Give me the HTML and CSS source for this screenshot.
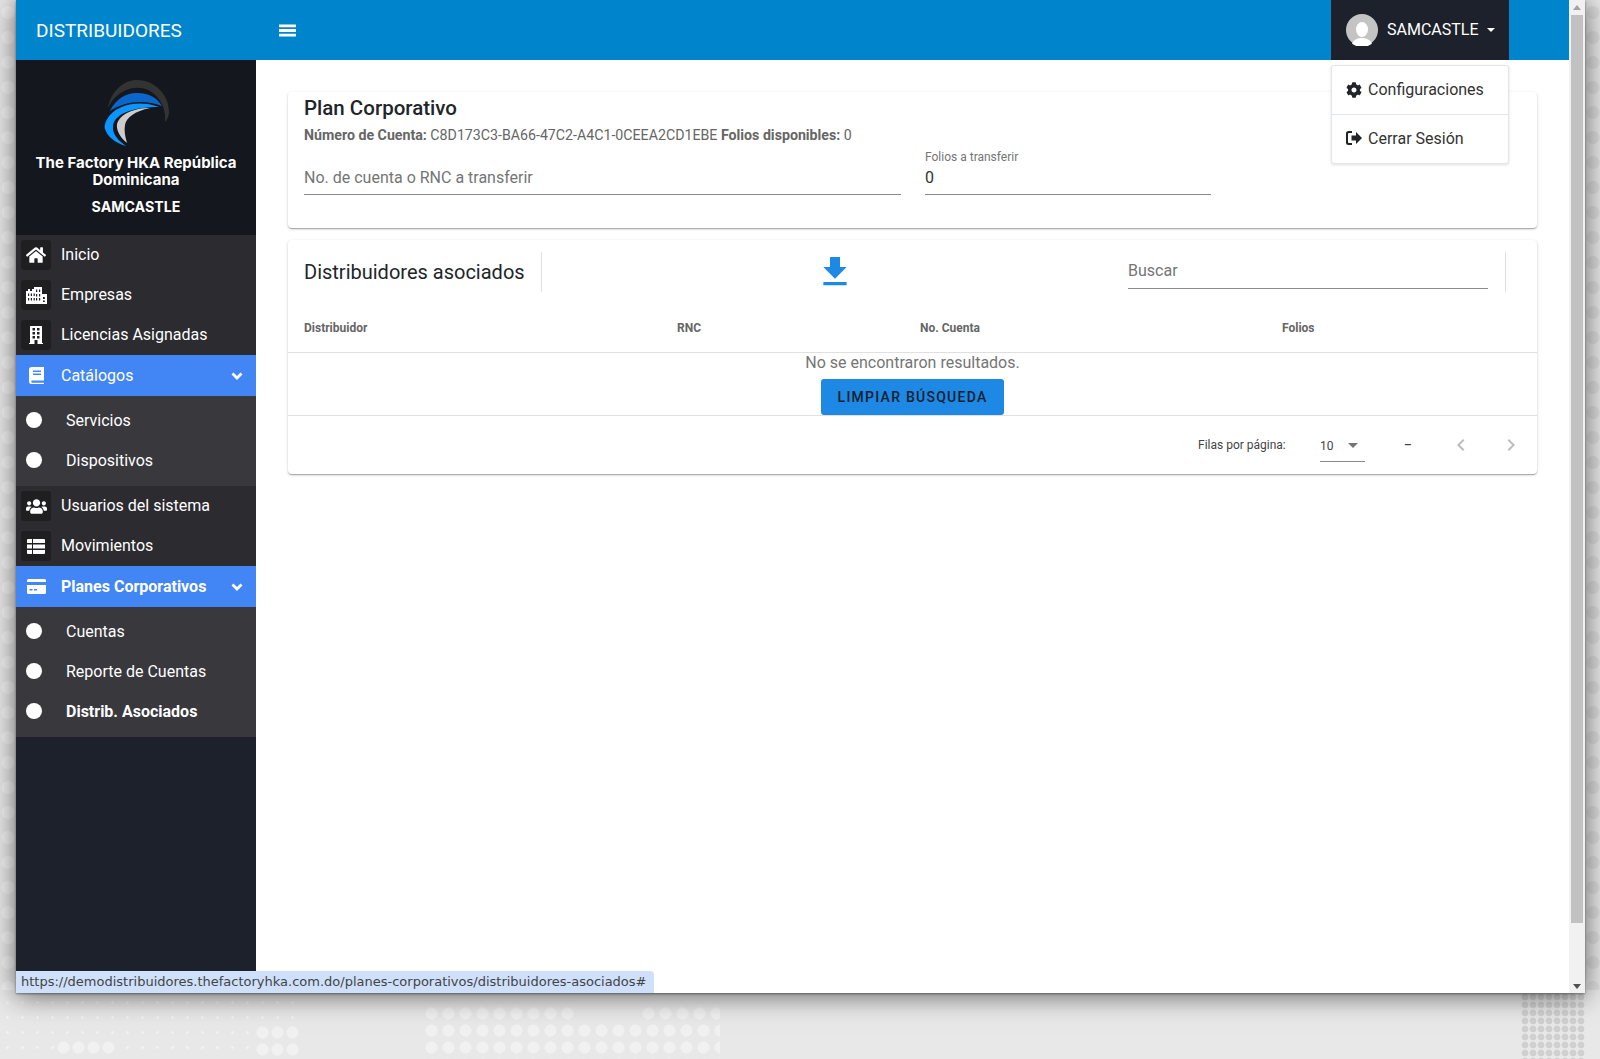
FILE: index.html
```html
<!DOCTYPE html>
<html lang="es">
<head>
  <meta charset="UTF-8">
  <title>Distribuidores</title>
  <link rel="stylesheet" href="styles.css">
</head>
<body>
  <!-- dotted wallpaper behind the browser window -->
  <div class="dots specks"></div>
  <div class="dots hex hex-a"></div>
  <div class="dots hex hex-b"></div>
  <div class="dots hex hex-c"></div>
  <div class="dots hex hex-d"></div>
  <div class="dots hex hex-e"></div>
  <div class="dots strip strip-left"></div>
  <div class="dots strip strip-right"></div>
  <div class="dots grid-right"></div>

  <div class="window">
    <div class="page">
      <header class="topbar">
        <div class="brand">DISTRIBUIDORES</div>
        <div class="burger">
          <svg viewBox="0 0 18 16" width="17" height="15"><path d="M0 1.5h18v3H0zM0 6.500h18v3H0zM0 11.500h18v3H0z" fill="#fff"/></svg>
        </div>
        <div class="user">
          <svg class="avatar" viewBox="0 0 32 32" width="32" height="32">
            <circle cx="16" cy="16" r="16" fill="#c4c4c4"/>
            <ellipse cx="16" cy="15.500" rx="6" ry="7.500" fill="#fff"/>
            <path d="M6 29.500c2-4 6-5.500 10-5.500s8 1.500 10 5.500a16 16 0 0 1-20 0z" fill="#fff"/>
          </svg>
          <span class="user-name">SAMCASTLE</span>
          <span class="caret"></span>
        </div>
      </header>

      <div class="main">
        <aside class="sidebar">
          <div class="side-head">
            <svg class="logo" viewBox="0 0 90 80" width="90" height="80">
              <path d="M18 38C21 20 35 10 47 10c18 0 32 15 32 32 0 4-2 8-4 10 1-13-4-24-15-31C46 13 26 20 18 38z" fill="#333"/>
              <path d="M20 41C26 28 38 22 48 23c11 0 19 5 24 13-16-6-36-6-52 5z" fill="#0a66c8"/>
              <path d="M69 37C50 30 30 34 20 45c-5 6-6 12-5 14 2 7 10 14 21 17-8-6-14-12-13-20 1-10 15-19 46-19z" fill="#0a95ff"/>
              <path d="M60 38C44 38 30 44 27 54c-1 7 4 14 10 19-2-7-3-12-2-18 1-7 10-14 25-17z" fill="#ccc"/>
            </svg>
            <div class="company">The Factory HKA República Dominicana</div>
            <div class="side-user">SAMCASTLE</div>
          </div>

          <nav class="menu">
            <a class="item"><span class="ico"><svg viewBox="0 0 576 512" width="20" height="18"><path d="M280.37 148.26L96 300.11V464a16 16 0 0 0 16 16l112.06-.29a16 16 0 0 0 15.92-16V368a16 16 0 0 1 16-16h64a16 16 0 0 1 16 16v95.64a16 16 0 0 0 16 16.05L464 480a16 16 0 0 0 16-16V300L295.67 148.26a12.19 12.19 0 0 0-15.3 0zM571.6 251.47L488 182.56V44.05a12 12 0 0 0-12-12h-56a12 12 0 0 0-12 12v72.61L318.47 43a48 48 0 0 0-61 0L4.34 251.47a12 12 0 0 0-1.6 16.9l25.5 31A12 12 0 0 0 45.15 301l235.22-193.74a12.19 12.19 0 0 1 15.3 0L530.9 301a12 12 0 0 0 16.9-1.6l25.5-31a12 12 0 0 0-1.7-16.93z" fill="#fff"/></svg></span>Inicio</a>
            <a class="item"><span class="ico"><svg viewBox="0 0 21 17" width="21" height="17"><path fill-rule="evenodd" fill="#fff" d="M0 4h2V2h2v2h2V2h2V0h8v7h5v10H0zM2 6.500v2.500h1.200V6.500zm2.800 0v2.500H6V6.500zm2.800 0v2.500h1.200V6.500zM10 2.500V5h1.200V2.500zm3 0V5h1.200V2.500zM2 11v2.500h1.200V11zm2.800 0v2.500H6V11zm2.800 0v2.500h1.200V11zM10 7v2.500h1.200V7zm3 0v2.500h1.200V7zm-3 4v2.500h1.200V11zm3 0v2.500h1.200V11zm4 -1v2h1.800v-2zm0 3.500v1.500h1.800v-1.500z"/></svg></span>Empresas</a>
            <a class="item"><span class="ico"><svg viewBox="0 0 14 18" width="14" height="18"><path fill-rule="evenodd" fill="#fff" d="M1 0h12v17h1v1H0v-1h1zM3.500 2v2.500h2.500V2zm4.500 0v2.500h2.500V2zM3.500 6v2.500h2.500V6zM8 6v2.500h2.500V6zM3.500 10v2.500h2.500V10zM8 10v2.500h2.500V10zM5.500 14v4h3v-4z"/></svg></span>Licencias Asignadas</a>

            <a class="item open"><span class="ico"><svg viewBox="0 0 15 17" width="15" height="17"><path fill-rule="evenodd" fill="#fff" d="M2.500 0H15v13.500H3a1.200 1.200 0 0 0 0 2.200h12V17H2.500A2.500 2.500 0 0 1 0 14.500v-12A2.500 2.500 0 0 1 2.500 0zM4 3.500v1.500h8V3.500zM4 6.500V8h8V6.500z"/></svg></span>Catálogos<svg class="chev" viewBox="0 0 12 8" width="12" height="8"><path d="M1.500 1.500L6 6l4.500-4.500" fill="none" stroke="#fff" stroke-width="2.800"/></svg></a>
            <div class="sub">
              <a class="sub-item"><span class="dot"></span>Servicios</a>
              <a class="sub-item"><span class="dot"></span>Dispositivos</a>
            </div>

            <a class="item"><span class="ico"><svg viewBox="0 0 640 512" width="21" height="17"><path d="M96 224c35.300 0 64-28.700 64-64s-28.700-64-64-64-64 28.700-64 64 28.700 64 64 64zm448 0c35.300 0 64-28.700 64-64s-28.700-64-64-64-64 28.700-64 64 28.700 64 64 64zm32 32h-64c-17.600 0-33.500 7.100-45.100 18.600 40.300 22.100 68.900 62 75.100 109.400h66c17.700 0 32-14.300 32-32v-32c0-35.300-28.700-64-64-64zm-256 0c61.900 0 112-50.100 112-112S381.900 32 320 32 208 82.100 208 144s50.100 112 112 112zm76.800 32h-8.300c-20.800 10-43.900 16-68.500 16s-47.600-6-68.500-16h-8.300C179.600 288 128 339.600 128 403.200V432c0 26.500 21.500 48 48 48h288c26.500 0 48-21.500 48-48v-28.800c0-63.600-51.600-115.200-115.200-115.200zm-223.700-13.400C161.500 263.100 145.600 256 128 256H64c-35.300 0-64 28.700-64 64v32c0 17.700 14.300 32 32 32h65.900c6.300-47.400 34.900-87.300 75.200-109.400z" fill="#fff"/></svg></span>Usuarios del sistema</a>
            <a class="item"><span class="ico"><svg viewBox="0 0 18 15" width="18" height="15"><path fill="#fff" d="M1 0h4v4H0V1a1 1 0 0 1 1-1zM6 0h11a1 1 0 0 1 1 1v3H6zM0 5.500h5v4H0zM6 5.500h12v4H6zM0 11h5v4H1a1 1 0 0 1-1-1zM6 11h12v3a1 1 0 0 1-1 1H6z"/></svg></span>Movimientos</a>

            <a class="item open strong"><span class="ico"><svg viewBox="0 0 19 15" width="19" height="15"><path fill-rule="evenodd" fill="#fff" d="M1.500 0h16A1.500 1.500 0 0 1 19 1.500V3H0V1.500A1.500 1.500 0 0 1 1.500 0zM0 6h19v7.500a1.500 1.500 0 0 1-1.500 1.500h-16A1.500 1.500 0 0 1 0 13.500zM2.500 10v1.500h3V10zm4.500 0v1.500h3V10z"/></svg></span>Planes Corporativos<svg class="chev" viewBox="0 0 12 8" width="12" height="8"><path d="M1.500 1.500L6 6l4.500-4.500" fill="none" stroke="#fff" stroke-width="2.800"/></svg></a>
            <div class="sub">
              <a class="sub-item"><span class="dot"></span>Cuentas</a>
              <a class="sub-item"><span class="dot"></span>Reporte de Cuentas</a>
              <a class="sub-item current"><span class="dot"></span>Distrib. Asociados</a>
            </div>
          </nav>
        </aside>

        <main class="content">
          <section class="card plan">
            <h2 class="plan-title">Plan Corporativo</h2>
            <p class="plan-info"><b>Número de Cuenta:</b> C8D173C3-BA66-47C2-A4C1-0CEEA2CD1EBE <b>Folios disponibles:</b> 0</p>
            <div class="plan-form">
              <div class="field field-rnc">
                <span class="placeholder">No. de cuenta o RNC a transferir</span>
              </div>
              <div class="field field-folios">
                <span class="field-label">Folios a transferir</span>
                <span class="field-value">0</span>
              </div>
            </div>
          </section>

          <section class="card results">
            <div class="toolbar">
              <h3 class="toolbar-title">Distribuidores asociados</h3>
              <div class="toolbar-action">
                <svg viewBox="0 0 24 24" width="40" height="40"><path d="M19 9h-4V3H9v6H5l7 7 7-7zM5 18v2h14v-2H5z" fill="#1e88e5"/></svg>
              </div>
              <div class="search"><span class="placeholder">Buscar</span></div>
              <div class="toolbar-end"></div>
            </div>

            <div class="table-head">
              <span class="col-name">Distribuidor</span>
              <span class="col-rnc">RNC</span>
              <span class="col-account">No. Cuenta</span>
              <span class="col-folios">Folios</span>
            </div>

            <div class="empty">
              <div class="empty-text">No se encontraron resultados.</div>
              <button type="button" class="btn-clear">LIMPIAR BÚSQUEDA</button>
            </div>

            <div class="pager">
              <span class="pager-label">Filas por página:</span>
              <span class="pager-select">10<span class="pager-arrow"></span></span>
              <span class="pager-range">–</span>
              <svg class="pager-prev" viewBox="0 0 24 24" width="24" height="24"><path d="M15.410 7.410L14 6l-6 6 6 6 1.410-1.410L10.830 12z" fill="#bdbdbd"/></svg>
              <svg class="pager-next" viewBox="0 0 24 24" width="24" height="24"><path d="M10 6L8.590 7.410 13.170 12l-4.580 4.590L10 18l6-6z" fill="#bdbdbd"/></svg>
            </div>
          </section>
        </main>
      </div>

      <!-- open user menu -->
      <div class="user-menu">
        <a class="user-menu-item">
          <svg viewBox="0 0 512 512" width="16" height="16"><path d="M487.400 315.700l-42.600-24.600c4.300-23.200 4.300-47 0-70.200l42.600-24.600c4.900-2.800 7.100-8.600 5.500-14-11.100-35.600-30-67.800-54.700-94.600-3.800-4.100-10-5.100-14.800-2.300L380.800 110c-17.900-15.400-38.500-27.300-60.800-35.100V25.800c0-5.600-3.900-10.500-9.400-11.700-36.700-8.200-74.300-7.800-109.200 0-5.500 1.200-9.400 6.100-9.400 11.700V75c-22.200 7.900-42.800 19.800-60.800 35.100L88.700 85.500c-4.900-2.800-11-1.900-14.800 2.300-24.700 26.700-43.600 58.900-54.700 94.600-1.700 5.400.6 11.200 5.500 14L67.300 221c-4.300 23.200-4.300 47 0 70.200l-42.600 24.600c-4.900 2.800-7.100 8.600-5.500 14 11.100 35.600 30 67.800 54.700 94.600 3.800 4.100 10 5.100 14.800 2.300l42.600-24.600c17.900 15.400 38.500 27.300 60.800 35.100v49.200c0 5.600 3.900 10.500 9.400 11.700 36.700 8.200 74.300 7.800 109.200 0 5.500-1.200 9.400-6.100 9.400-11.700v-49.200c22.200-7.900 42.800-19.800 60.800-35.100l42.600 24.600c4.900 2.800 11 1.900 14.800-2.300 24.700-26.700 43.600-58.900 54.700-94.600 1.500-5.500-.7-11.300-5.600-14.100zM256 336c-44.100 0-80-35.900-80-80s35.900-80 80-80 80 35.900 80 80-35.900 80-80 80z" fill="#212529"/></svg>
          Configuraciones
        </a>
        <a class="user-menu-item">
          <svg viewBox="0 0 16 14" width="16" height="14"><path fill="#212529" d="M10 1l6 6-6 6V9.500H5.500v-5H10zM2.500 0H6v2H3a1 1 0 0 0-1 1v8a1 1 0 0 0 1 1h3v2H2.500A2.500 2.500 0 0 1 0 11.500v-9A2.500 2.500 0 0 1 2.500 0z"/></svg>
          Cerrar Sesión
        </a>
      </div>

      <div class="status">https://demodistribuidores.thefactoryhka.com.do/planes-corporativos/distribuidores-asociados#</div>
    </div>

    <div class="scrollbar">
      <span class="sb-up"></span>
      <span class="sb-thumb"></span>
      <span class="sb-down"></span>
    </div>
  </div>
</body>
</html>
```

FILE: styles.css
```css
* {
  box-sizing: border-box;
}
html, body {
  margin: 0;
  height: 1059px;
  overflow: hidden;
}
body {
  position: relative;
  padding-left: 16px;
  background: #e8e8e8;
  font-family: Roboto, sans-serif;
  color: #212529;
}
p, h2, h3 {
  margin: 0;
}

/* wallpaper dots */
.dots {
  position: absolute;
}
.specks {
  left: 0;
  top: 995px;
  width: 300px;
  height: 64px;
  background-image: radial-gradient(circle, #f2f2f2 1px, transparent 1.6px);
  background-size: 15px 15px;
}
.hex {
  background-image: radial-gradient(circle, #f1f1f1 5.5px, transparent 6.5px);
  background-size: 17px 17px;
}
.hex-a { left: 423px; top: 1005px; width: 153px; height: 17px; }
.hex-b { left: 423px; top: 1022px; width: 297px; height: 37px; }
.hex-c { left: 640px; top: 1005px; width: 80px; height: 17px; }
.hex-d { left: 56px; top: 1039px; width: 60px; height: 17px; background-size: 15px 17px; }
.hex-e { left: 255px; top: 1024px; width: 45px; height: 35px; background-size: 15px 17px; }
.strip {
  top: 0;
  width: 16px;
  height: 990px;
  background-image: radial-gradient(circle, #f2f2f2 6px, transparent 7px);
  background-size: 16px 25px;
}
.strip-left { left: 0; }
.strip-right { left: 1585px; width: 15px; background-image: radial-gradient(circle, #dcdcdc 6px, transparent 7px); }
.grid-right {
  left: 1521px;
  top: 993px;
  width: 64px;
  height: 66px;
  background-image: radial-gradient(circle, #d0d0d0 3px, transparent 3.8px);
  background-size: 8px 8px;
}

/* browser window */
.window {
  position: relative;
  z-index: 1;
  display: flex;
  width: 1569px;
  height: 993px;
  background: #fff;
  box-shadow: 0 1px 2px rgba(0, 0, 0, .4), 0 2px 26px rgba(0, 0, 0, .6);
}
.page {
  position: relative;
  flex: 1;
  min-width: 0;
  display: flex;
  flex-direction: column;
  overflow: hidden;
}
.scrollbar {
  width: 16px;
  display: flex;
  flex-direction: column;
  align-items: center;
  background: #f1f1f1;
}
.sb-up, .sb-down {
  width: 0;
  height: 0;
  margin: 5px 0;
  border-left: 4px solid transparent;
  border-right: 4px solid transparent;
}
.sb-up {
  border-bottom: 5px solid #a3a3a3;
}
.sb-down {
  border-top: 5px solid #505050;
  margin-top: auto;
  margin-bottom: 4px;
}
.sb-thumb {
  width: 12px;
  height: 908px;
  background: #c1c1c1;
}

/* top bar */
.topbar {
  height: 60px;
  flex-shrink: 0;
  display: flex;
  align-items: center;
  background: #0084cc;
  color: #fff;
}
.brand {
  width: 240px;
  padding-left: 20px;
  font-size: 19px;
}
.burger {
  display: flex;
  padding-left: 23px;
}
.user {
  margin-left: auto;
  margin-right: 60px;
  width: 178px;
  height: 60px;
  display: flex;
  align-items: center;
  padding-left: 15px;
  background: #1c212b;
  font-size: 16px;
}
.user-name {
  margin-left: 9px;
  margin-bottom: 2px;
}
.caret {
  margin-left: 8px;
  margin-bottom: 1px;
  border-top: 4px solid #fff;
  border-left: 4px solid transparent;
  border-right: 4px solid transparent;
}

.main {
  flex: 1;
  display: flex;
  min-height: 0;
}

/* sidebar */
.sidebar {
  width: 240px;
  flex-shrink: 0;
  display: flex;
  flex-direction: column;
  background: #1c212b;
  color: #fff;
}
.side-head {
  height: 175px;
  display: flex;
  flex-direction: column;
  align-items: center;
  padding: 10px 15px 0;
  background: #14171e;
  text-align: center;
}
.logo {
  display: block;
  flex-shrink: 0;
  margin-left: -3px;
}
.company {
  margin-top: 4px;
  font-family: Inter, sans-serif;
  font-size: 15px;
  line-height: 17px;
  font-weight: 700;
}
.side-user {
  margin-top: 10px;
  font-family: Inter, sans-serif;
  font-size: 14.2px;
  line-height: 17px;
  font-weight: 700;
}
.menu {
  display: flex;
  flex-direction: column;
  background: #2b2b30;
}
.item {
  height: 40px;
  display: flex;
  align-items: center;
  padding-left: 5px;
  padding-bottom: 2px;
  font-size: 16px;
}
.ico {
  width: 30px;
  height: 30px;
  margin-top: 2px;
  margin-right: 10px;
  display: flex;
  align-items: center;
  justify-content: center;
  border-radius: 3px;
  background: #1f1f22;
}
.item.open {
  height: 41px;
  padding-bottom: 0;
  background: #4285f4;
}
.item.open .ico {
  margin-top: 0;
  background: none;
}
.strong {
  font-weight: 700;
}
.chev {
  margin-left: auto;
  margin-right: 13px;
}
.sub {
  background: #38383d;
  padding: 4px 0 6px;
}
.sub-item {
  height: 40px;
  display: flex;
  align-items: center;
  padding-left: 10px;
  font-size: 16px;
}
.sub-item.current {
  font-weight: 700;
}
.dot {
  width: 16px;
  height: 16px;
  margin-right: 24px;
  border-radius: 50%;
  background: #fff;
}

/* content */
.content {
  flex: 1;
  min-width: 0;
  padding: 32px 32px 0;
}
.card {
  background: #fff;
  border-radius: 4px;
  box-shadow: 0 1px 3px rgba(0, 0, 0, .2), 0 1px 1px rgba(0, 0, 0, .14), 0 2px 1px -1px rgba(0, 0, 0, .12);
}
.plan {
  height: 136px;
  padding: 3px 16px 0;
}
.plan-title {
  font-size: 20.5px;
  line-height: 26px;
  font-weight: 500;
}
.plan-info {
  margin-top: 4px;
  font-size: 14.2px;
  line-height: 20px;
  color: #666;
}
.plan-form {
  display: flex;
  gap: 24px;
}
.field {
  height: 50px;
  display: flex;
  flex-direction: column;
  justify-content: flex-end;
  padding-bottom: 6px;
  border-bottom: 1px solid #8a8a8a;
  font-size: 16px;
  line-height: 20px;
}
.field-rnc {
  width: 597px;
}
.field-folios {
  width: 286px;
}
.field-label {
  margin-bottom: 4px;
  font-size: 12px;
  line-height: 14px;
  color: #757575;
}
.field-value {
  color: #333;
}
.placeholder {
  color: #757575;
}

/* table card */
.results {
  margin-top: 12px;
  height: 234px;
  display: flex;
  flex-direction: column;
}
.toolbar {
  height: 64px;
  flex-shrink: 0;
  display: flex;
  align-items: flex-start;
  padding: 12px 0 0 16px;
}
.toolbar-title {
  width: 238px;
  height: 40px;
  display: flex;
  align-items: center;
  border-right: 1px solid #e0e0e0;
  font-size: 20px;
  font-weight: 400;
}
.toolbar-action {
  width: 586px;
  height: 40px;
  display: flex;
  justify-content: center;
}
.search {
  width: 360px;
  height: 37px;
  display: flex;
  align-items: flex-end;
  font-size: 16px;
  line-height: 20px;
  padding-bottom: 7px;
  border-bottom: 1px solid #8a8a8a;
}
.toolbar-end {
  width: 1px;
  height: 40px;
  margin-left: 17px;
  background: #e0e0e0;
}
.table-head {
  height: 49px;
  flex-shrink: 0;
  display: flex;
  align-items: center;
  border-bottom: 1px solid #e0e0e0;
  font-size: 12px;
  font-weight: 700;
  color: #666;
}
.col-name { margin-left: 16px; width: 373px; }
.col-rnc { width: 243px; }
.col-account { width: 362px; }
.empty {
  height: 63px;
  flex-shrink: 0;
  display: flex;
  flex-direction: column;
  align-items: center;
  border-bottom: 1px solid #e0e0e0;
}
.empty-text {
  height: 26px;
  font-size: 16px;
  line-height: 20px;
  color: #757575;
}
.btn-clear {
  width: 183px;
  height: 36px;
  border: none;
  border-radius: 3px;
  background: #1e88e5;
  color: #14212e;
  font-family: Roboto, sans-serif;
  font-size: 14px;
  font-weight: 500;
  letter-spacing: 1.25px;
}
.pager {
  flex: 1;
  display: flex;
  align-items: center;
  font-size: 12px;
  color: #444;
}
.pager-label {
  margin-left: 910px;
  width: 122px;
}
.pager-select {
  width: 45px;
  height: 31px;
  display: flex;
  align-items: center;
  justify-content: space-between;
  padding-right: 7px;
  margin-top: 2px;
  border-bottom: 1px solid #8a8a8a;
}
.pager-arrow {
  border-top: 5px solid #757575;
  border-left: 5px solid transparent;
  border-right: 5px solid transparent;
}
.pager-range {
  margin-left: 39px;
  width: 43px;
  font-weight: 500;
}
.pager-prev {
  margin-left: 2px;
}
.pager-next {
  margin-left: 26px;
}

/* dropdown */
.user-menu {
  position: absolute;
  left: 1315px;
  top: 65px;
  width: 178px;
  height: 99px;
  background: #fff;
  border: 1px solid #e3e6e8;
  border-radius: 3px;
  box-shadow: 0 1px 3px rgba(0, 0, 0, .12);
}
.user-menu-item {
  height: 48px;
  display: flex;
  align-items: center;
  gap: 6px;
  padding-left: 14px;
  padding-bottom: 1px;
  font-size: 16px;
  color: #333;
}
.user-menu-item + .user-menu-item {
  border-top: 1px solid #e3e6e8;
}

/* link preview bubble */
.status {
  position: absolute;
  left: 0;
  bottom: 0;
  width: 638px;
  height: 22px;
  padding-left: 5px;
  background: #cfe0fb;
  border-radius: 0 4px 0 0;
  font-family: "DejaVu Sans", sans-serif;
  font-size: 13px;
  line-height: 22px;
  color: #444;
  white-space: nowrap;
}
```
